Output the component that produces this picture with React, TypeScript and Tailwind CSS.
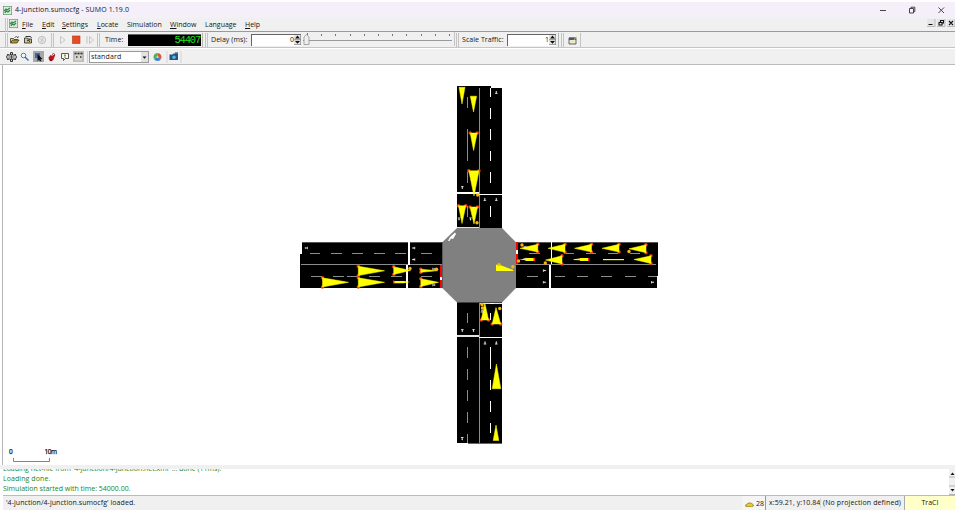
import React from "react";

const W = "bg-[#f0f0f0]";

function Label({ children, w, className = "" }: { children: React.ReactNode; w: string; className?: string }) {
  return <span className={`block shrink-0 whitespace-pre ${w} ${className}`}>{children}</span>;
}

function Grip() {
  return (
    <span className="flex h-[14px] w-[4px] shrink-0 gap-[1px]">
      <i className="w-[1px] bg-[#c4c4c4]" />
      <i className="w-[1px] bg-[#c4c4c4]" />
    </span>
  );
}

function NetIcon() {
  return (
    <svg width="9" height="9" viewBox="0 0 9 9" className="block shrink-0">
      <rect x=".3" y=".3" width="8.4" height="8.4" fill="#dcebdc" stroke="#51985a" strokeWidth=".7" />
      <path d="M1 5l2-2 1 1 3-2M2 7l1-2 2 1 2-2" stroke="#35854a" strokeWidth="1.2" fill="none" />
    </svg>
  );
}

function Spin() {
  return (
    <svg width="7" height="10" viewBox="0 0 7 10" className="block shrink-0">
      <path d="M0 0h7v10H0z" fill="#e5e5e5" />
      <path d="M0 4.7h7M0 9.7h7M6.7 0v10" stroke="#707070" strokeWidth=".7" />
      <path d="M3.5 .6l2.500 3h-5zM3.500 8.800L6 6H1z" fill="#111" />
    </svg>
  );
}

const menus: [string, string, string][] = [
  ["F", "ile", "w-[20px]"],
  ["E", "dit", "w-[20px]"],
  ["S", "ettings", "w-[35px]"],
  ["L", "ocate", "w-[30px]"],
  ["", "Simulation", "w-[43px]"],
  ["W", "indow", "w-[35px]"],
  ["", "Language", "w-[40px]"],
  ["H", "elp", "w-[20px]"],
];

type P = [number, number];

// tip, then the two corners of the wide end; braking cars carry red lights
function Car({ p, red = false }: { p: [P, P, P]; red?: boolean }) {
  return (
    <g>
      {red && [p[1], p[2]].map((q, i) => <circle key={i} cx={q[0]} cy={q[1]} r="1.7" fill="#f03a10" />)}
      <polygon points={p.map((q) => q.join(",")).join(" ")} fill="#ff0" stroke="#ff0" strokeWidth=".5" />
    </g>
  );
}

const cars: { p: [P, P, P]; red?: boolean }[] = [
  { p: [[462, 104], [459, 87.3], [465, 87.3]] },
  { p: [[473.5, 112], [470.3, 96.2], [476.6, 96.2]] },
  { p: [[473.6, 150.5], [470.2, 133], [477.2, 133]], red: true },
  { p: [[474, 196], [468.8, 170.8], [479, 170.8]], red: true },
  { p: [[462, 223.5], [458.5, 205.8], [465.8, 205.8]], red: true },
  { p: [[474, 224], [470, 207], [477.5, 207]], red: true },
  { p: [[384.5, 270.8], [358.3, 266.2], [358.3, 275.6]], red: true },
  { p: [[384.5, 282.3], [358.3, 277.8], [358.3, 287]], red: true },
  { p: [[348.5, 282.3], [322.5, 277.8], [322.5, 287]], red: true },
  { p: [[410.5, 270.5], [393.7, 266.8], [393.7, 274.4]], red: true },
  { p: [[437.5, 270.7], [420.8, 269.2], [420.8, 272.3]], red: true },
  { p: [[438.5, 282.3], [420.8, 278.8], [420.8, 286.5]], red: true },
  { p: [[520, 248.3], [537.8, 244.3], [537.8, 252]], red: true },
  { p: [[548, 248.3], [565, 244.3], [565, 252.3]], red: true },
  { p: [[574.5, 248.3], [591.5, 244.3], [591.5, 252]], red: true },
  { p: [[602, 248.3], [619, 244.3], [619, 252]], red: true },
  { p: [[629, 248.8], [646, 244.7], [646, 252.7]], red: true },
  { p: [[545.5, 260], [562, 255.8], [562, 264]], red: true },
  { p: [[634, 259.5], [651, 255.8], [651, 263.5]], red: true },
  { p: [[484.8, 303], [481.2, 320], [488.6, 320]], red: true },
  { p: [[496, 307.5], [492.2, 324], [500.7, 324]], red: true },
  { p: [[496.4, 364], [492.2, 388.7], [500.8, 388.7]] },
  { p: [[496, 425], [493.2, 440.5], [498.8, 440.5]] },
];

function Dashes({ at, cross, vertical, white }: { at: P[]; cross: number; vertical?: boolean; white?: boolean }) {
  return (
    <g fill={white ? "#fff" : "#8c8c8c"}>
      {at.map(([a, b]) =>
        vertical ? (
          <rect key={a} x={cross} y={a} width="1" height={b - a} />
        ) : (
          <rect key={a} x={a} y={cross} width={b - a} height="1" />
        )
      )}
    </g>
  );
}

const dots: P[] = [
  [477.7, 195], [477, 222.7], [499, 264.6], [512.8, 266.7], [410, 268.5], [436.5, 269.3],
  [522, 245], [518.5, 261], [545.3, 263], [629, 251.5], [482, 304.5], [499.7, 308.5], [482.500, 308],
];

// small white lane arrows: x, y, rotation
const arrows: [number, number, number][] = [
  [496.3, 92.5, 0], [462.3, 187.5, 180], [484.8, 199.5, 0], [496.3, 199.5, 0],
  [462.3, 330.5, 180], [473.5, 330.5, 180], [485, 342.8, 0], [496.3, 342.8, 0], [462.2, 438.7, 180],
  [306.2, 248, -90], [413.6, 248, -90], [413.6, 259.5, -90], [434, 269, 90], [434, 285, 90],
  [544.5, 270.6, 90], [544.5, 282.2, 90], [652.6, 282.2, 90], [524.8, 247, -90], [524.8, 259, -90],
  [459, 219, 180], [470.5, 219, 180], [482, 311, 0],
];

function Network() {
  return (
    <svg viewBox="3 65 952 400" width="952" height="400" className="block shrink-0">
      <g fill="#000" shapeRendering="crispEdges">
        <path d="M457 86h34v2h11v140h-45z" />
        <path d="M457 302h45v142h-34v-1h-11z" />
        <path d="M302 242h141v46H300v-34h2z" />
        <path d="M516 242h142v34h-1v12H516z" />
      </g>
      <path d="M457 228H502L516 242.3V288L502 302.5H457L442.3 288V242.3Z" fill="#808080" />
      <g fill="#8c8c8c" shapeRendering="crispEdges">
        <rect x="479" y="88" width="1" height="140" />
        <rect x="479" y="303" width="1" height="141" />
        <rect x="301" y="264" width="141" height="1" />
        <rect x="516" y="264" width="140" height="1" />
        <rect x="302" y="242" width="141" height="1" fill="#555" />
        <rect x="516" y="242" width="142" height="1" fill="#555" />
        <rect x="468" y="443" width="34" height="1" fill="#666" />
      </g>
      <g shapeRendering="crispEdges">
        <Dashes vertical cross={467} at={[[97, 108], [129, 140], [140, 151], [151, 161], [172, 183], [206, 217]]} />
        <Dashes vertical white cross={490} at={[[88, 97], [108, 119], [129, 140], [151, 161], [172, 183], [206, 217]]} />
        <Dashes vertical cross={467} at={[[313, 323], [347, 358], [369, 380], [390, 401], [412, 423], [434, 443]]} />
        <Dashes vertical white cross={490} at={[[313, 320], [347, 358], [358, 369], [380, 390], [401, 412], [423, 433]]} />
        <Dashes cross={253} at={[[310, 320], [331, 342], [352, 363], [374, 385], [395, 406], [421, 432]]} />
        <Dashes cross={276} at={[[311, 322], [333, 344], [347, 358], [369, 380], [391, 402], [421, 432]]} />
        <Dashes cross={253} at={[[529, 540], [564, 574], [586, 596], [608, 618], [630, 640]]} />
        <Dashes cross={276} at={[[527, 538], [555, 565], [577, 588], [601, 612], [625, 636], [648, 657]]} />
      </g>
      <g fill="#fff" shapeRendering="crispEdges">
        <rect x="457" y="192" width="22" height="2" />
        <rect x="479" y="194" width="23" height="1" />
        <rect x="457" y="335" width="22" height="2" fill="#e4e4e4" />
        <rect x="479" y="337" width="23" height="1" />
        <rect x="408" y="242" width="2" height="23" />
        <rect x="406" y="265" width="2" height="23" />
        <rect x="551" y="242" width="1" height="22" />
        <rect x="549" y="265" width="2" height="23" />
        <rect x="440" y="277" width="2" height="3" />
        <rect x="516" y="250" width="2" height="4" />
      </g>
      <g shapeRendering="crispEdges">
        <path d="M440 265h2v12h-2zM440 280h2v8h-2zM516 242h2v8h-2zM516 254h2v10h-2z" fill="#f00" />
        <path d="M457 227h22v1h-22zM480 303h22v1h-22z" fill="#ff0" />
        <rect x="465" y="227" width="4" height="1" fill="#ddd" />
        <rect x="490" y="303" width="4" height="1" fill="#fff" />
      </g>
      <path d="M448 241l2-4 5-4.500 1 1.500-3 5-2-.5-1.500 2.500z" fill="#fff" />
      {cars.map((c, i) => (
        <Car key={i} {...c} />
      ))}
      <g fill="#ff0">
        <path d="M496 264.700l4 .3 13.500 5-.5 1H496z" />
        <path d="M394 281h10l6 1-6 1.300h-10z" />
        <path d="M519 259.500l6-.8 1-.6h8v3h-8l-1-.8z" />
        <path d="M573.500 259.200l6-.6 1-.6h8v3h-8l-1-.8-6-.3z" />
        <path d="M603 259h21v1.200h-21z" />
      </g>
      <g fill="#f03010">
        <path d="M393 280.500h1.500v3H393zM533.500 257.800h1.500v3.500h-1.500zM588 258h1.500v3H588z" />
      </g>
      <g fill="#ffb400">
        {dots.map(([x, y], i) => (
          <circle key={i} cx={x} cy={y} r="1.700" />
        ))}
      </g>
      <g fill="#ddd">
        {arrows.map(([x, y, r], i) => (
          <path key={i} transform={`translate(${x} ${y}) rotate(${r})`} d="M0-1.800l1 1.600H.5v1h.8v.8h-2.600v-.8h.8v-1h-.5z" />
        ))}
      </g>
      <path d="M13.500 458v3.500h36V458" fill="none" stroke="#777" strokeWidth=".9" />
      <g fontFamily="Open Sans, sans-serif" fontSize="6.500" fill="#111" stroke="#111" strokeWidth=".25">
        <text x="9" y="454">0</text>
        <text x="44.500" y="454" textLength="12.500">10m</text>
      </g>
    </svg>
  );
}

export default function App() {
  return (
    <div className="flex h-[512px] w-[955px] flex-col overflow-hidden bg-white pt-[2px] font-['Open_Sans',sans-serif] text-[7px] leading-[10px] text-[#151515]">
      {/* title bar */}
      <header className="flex h-[16px] shrink-0 items-center bg-[#f4eff8] pl-[3px]">
        <NetIcon />
        <Label w="w-[865px]" className="pl-[3px] tracking-[0.11px]">4-junction.sumocfg - SUMO 1.19.0</Label>
        <svg width="72" height="12" viewBox="877 3 72 12" fill="none" stroke="#333" strokeWidth=".9" className="block">
          <path d="M880 9.500h6" />
          <path d="M909.500 7.500h4v4.500h-4zM911 7.300V6.200h3.800v4.500h-1" />
          <path d="M938.500 6.500l5.500 5.500M944 6.500l-5.500 5.500" />
        </svg>
      </header>

      {/* menu bar */}
      <nav className={`flex h-[14px] shrink-0 items-center border-b border-[#9a9a9a] pl-[5px] ${W}`}>
        <Grip />
        <span className="flex pb-[3px]"><NetIcon /></span>
        <span className="flex w-[910px] pl-[4px]">
          {menus.map(([u, rest, w]) => (
            <Label key={rest} w={w}>
              {u && <u className="decoration-[0.6px] underline-offset-1">{u}</u>}
              {rest}
            </Label>
          ))}
        </span>
        <svg width="28" height="8" viewBox="0 0 28 8" className="mb-[3px] block shrink-0">
          <path d="M0 0h8v8H0zM10 0h8v8h-8zM20 0h8v8h-8z" fill="#e6e6e6" />
          <path d="M0 7.600h8V0M10 7.600h8V0M20 7.600h8V0" fill="none" stroke="#999" strokeWidth=".6" />
          <path d="M1.500 5.500h4M12 3.500h3v2.500h-3zM13.500 3V1.500h3V4H15M22 2l4 4M26 2l-4 4" fill="none" stroke="#111" strokeWidth="1.100" />
        </svg>
      </nav>

      {/* simulation toolbar */}
      <div className={`flex h-[16px] shrink-0 items-center border-b border-[#c5c5c5] pl-[5px] ${W}`}>
        <Grip />
        <svg width="41" height="14" viewBox="9 32 41 14" className="block shrink-0">
          <path d="M10.500 41.500v-4h3l1 1h3v1" fill="#f8dc50" stroke="#222" strokeWidth=".7" />
          <path d="M10.500 42l2-3h6.500l-2 3z" fill="#b89a20" stroke="#222" strokeWidth=".7" />
          <path d="M14.500 36.500q2-2 3.500.3l.3-1.500" fill="none" stroke="#222" strokeWidth=".7" />
          <path d="M24.500 42v-5h3l1 1h3v4z" fill="#cfc78d" stroke="#222" strokeWidth=".8" />
          <path d="M25.500 35.500h5l1 1.500M27 40l3-1.500M28 38.500l2 2.500" fill="none" stroke="#222" strokeWidth=".9" />
          <circle cx="42" cy="39" r="3.700" fill="#e8e8e8" stroke="#c2c2c2" />
          <path d="M39.500 37.500l5 3M40 41l4-4M42 36v6" stroke="#c4c4c4" strokeWidth=".7" />
        </svg>
        <span className="ml-[1px] flex"><Grip /></span>
        <svg width="42" height="14" viewBox="55 32 42 14" className="block shrink-0">
          <path d="M60.500 35.500l4.500 3.500-4.500 3.500z" fill="#f0f0f0" stroke="#bdbdbd" strokeWidth=".8" />
          <rect x="72.500" y="35" width="7.500" height="7.500" fill="#e94a24" stroke="#ac391d" strokeWidth=".6" />
          <path d="M87 35v7.500M89.500 35.500l4 3.500-4 3.500z" fill="#f0f0f0" stroke="#bdbdbd" strokeWidth=".9" />
        </svg>
        <Grip />
        <Label w="w-[27px]" className="pl-[4px] tracking-[0.1px]">Time:</Label>
        <span className="flex h-[12px] w-[73px] shrink-0 items-center justify-end border-t border-[#666] bg-black pr-[1px] font-['Liberation_Mono',monospace] text-[10.5px] leading-[10px] text-[#20e020]">
          <span className="-tracking-[1.2px]">54407</span>
        </span>
        <span className="ml-[1px] flex border-l border-[#b5b5b5] pl-[2px]"><Grip /></span>
        <Label w="w-[42px]" className="pl-[2px] tracking-[0.05px]">Delay (ms):</Label>
        <span className="flex h-[12px] w-[50px] shrink-0 items-center justify-end border-l border-t border-[#666] bg-white">0<Spin /></span>
        <svg width="155" height="15" viewBox="301 32 155 15" className="block shrink-0">
          <path d="M303 40.500h149" stroke="#9a9a9a" strokeWidth="1.200" />
          <path d="M307.500 33v2M321.500 34v2M335.500 34v2M350.500 34v2M364.500 34v2M378.500 34v2M392.500 34v2M406.500 34v2M421.500 34v2M435.500 34v2M449.500 34v2" stroke="#555" strokeWidth=".8" />
          <path d="M304 37l2.500-2.500L309 37v7.500h-5z" fill="#eee" stroke="#888" strokeWidth=".7" />
          <path d="M454.500 32v14" stroke="#c4c4c4" />
        </svg>
        <Grip />
        <Label w="w-[47px]" className="pl-[2px] tracking-[0.05px]">Scale Traffic:</Label>
        <span className="flex h-[12px] w-[49px] shrink-0 items-center justify-end border-l border-t border-[#666] bg-white">1<Spin /></span>
        <span className="ml-[2px] flex border-l border-[#b5b5b5] pl-[2px]"><Grip /></span>
        <svg width="16" height="14" viewBox="565 32 16 14" className="block shrink-0">
          <path d="M569 37h7v6h-7z" fill="#eee8c6" stroke="#444" strokeWidth=".8" />
          <path d="M569 36.500h7V39h-7z" fill="#455779" />
          <path d="M574 39l2.500-3.500" stroke="#e1b728" />
          <path d="M580.500 32v14" stroke="#c4c4c4" />
        </svg>
      </div>

      {/* view toolbar */}
      <div className={`flex h-[17px] shrink-0 items-center border-b border-t border-b-[#bcbcbc] border-t-white pl-[3px] ${W}`}>
        <svg width="86" height="15" viewBox="3 49 86 15" className="block shrink-0">
          <path d="M10.500 52.500h2v2.500h2.500v-1l1.500 3-1.500 3v-1h-2.500v2.500h-2V59H8v1l-1.500-3L8 54v1h2.500z" fill="#ddd" stroke="#222" strokeWidth=".9" />
          <path d="M11.500 54v6M8.500 57h6" stroke="#222" strokeWidth=".7" />
          <circle cx="23.500" cy="55.500" r="2.300" fill="#eef7ff" stroke="#3a82ce" />
          <path d="M25 57l3.500 3.500" stroke="#246bb0" strokeWidth="1.300" />
          <rect x="33" y="51" width="11" height="11" fill="#a5a7aa" />
          <path d="M35 53h5v5h-5z" fill="#4169a2" />
          <path d="M37.500 54l5 5-2 .2 1 2h-1.500l-1-1.500-1.500 1.500z" fill="#111" />
          <path d="M48.500 57.500l2-2.500 2 1 1.500-2 1.300 1-2 5-2.300 1.500-2-1.500z" fill="#c0171c" />
          <circle cx="53.500" cy="54.500" r="1" fill="#f0f0f0" stroke="#7a1518" strokeWidth=".7" />
          <path d="M50 60h2" stroke="#222" strokeWidth="1.200" />
          <path d="M61.500 53.500h7v5h-3l-2 2v-2h-2z" fill="#fffce4" stroke="#333" strokeWidth=".8" />
          <path d="M65 54.500v2M65 57.300v.7" stroke="#222" />
          <rect x="73" y="51" width="11" height="11" fill="#bdbcb8" />
          <path d="M75 55h7v5.500h-7z" fill="#d9d5c7" />
          <path d="M74.500 53.500h2M77.500 53.500h2M80.500 53.500h2M76 57h1.500M80 57h1.500" stroke="#333" strokeWidth="1.300" />
          <path d="M87.500 51v12" stroke="#bbb" strokeWidth=".6" />
        </svg>
        <span className="flex h-[12px] w-[60px] shrink-0 items-center justify-between border border-[#999] bg-white pl-[1px]">
          <span className="tracking-[0.12px]">standard</span>
          <svg width="7" height="10" viewBox="0 0 7 10" className="block"><path d="M0 0h7v10H0z" fill="#e2e2e2" /><path d="M1.500 4.500h4l-2 2.300z" fill="#111" /></svg>
        </span>
        <svg width="34" height="15" viewBox="149 49 34 15" className="block shrink-0">
          <path d="M157.500 57V53a4 4 0 0 1 3.500 6z" fill="#e65332" />
          <path d="M157.500 57l3.500 2a4 4 0 0 1-7 0z" fill="#397fd8" />
          <path d="M157.500 57l-3.500 2a4 4 0 0 1 3.500-6z" fill="#42b65c" />
          <circle cx="157.500" cy="57" r="1" fill="#f5e070" />
          <path d="M167 51v12M181 51v12" stroke="#c5c5c5" strokeWidth=".6" />
          <path d="M169.500 54.500h3l1-1h4.500v6.500h-8.500z" fill="#215582" />
          <circle cx="174" cy="57.300" r="1.700" fill="#63b4e5" />
          <path d="M175 53h3" stroke="#333" />
        </svg>
      </div>

      <main className="ml-[2px] flex h-[400px] shrink-0 border-l border-[#b5b5b5] bg-white"><Network /></main>
      <div className={`h-[4px] shrink-0 ${W}`} />

      {/* message log */}
      <section className="flex h-[26px] shrink-0 justify-between bg-white pl-[3px] text-[#188518]">
        <div className="flex h-[25px] w-[300px] flex-col justify-end overflow-hidden whitespace-pre">
          <p className="h-[10px] shrink-0 -tracking-[0.01px]">Loading net-file from '4-junction/4-junction.net.xml' ... done (11ms).</p>
          <p className="h-[10px] shrink-0 tracking-[0.08px]">Loading done.</p>
          <p className="h-[10px] shrink-0">Simulation started with time: 54000.00.</p>
        </div>
        <svg width="6" height="26" viewBox="0 0 6 26" className="block">
          <path d="M0 0h6v26H0z" fill="#f0f0f0" />
          <path d="M3.500 3.500l2 2.500h-4zM3.500 22.500l2-2.500h-4z" fill="#111" />
          <path d="M0 8h6M0 17h6M0 25.500h6" stroke="#999" strokeWidth=".7" />
        </svg>
      </section>

      {/* status bar */}
      <footer className={`ml-[3px] flex h-[15px] shrink-0 items-center border-t border-[#bbb] ${W}`}>
        <Label w="w-[739px]" className="pl-[3px] tracking-[0.06px]">'4-junction/4-junction.sumocfg' loaded.</Label>
        <span className="flex h-[14px] w-[24px] shrink-0 items-center justify-end border-r border-[#999] bg-[#f5f5f5] pr-[1px] pt-[2px]">
          <svg width="9" height="5" viewBox="0 0 9 5" className="mr-[2px] block">
            <path d="M.5 3l1.500-.5 1-1.500h3l2 1.500.5 1.500-2 .7H1z" fill="#edcb23" stroke="#756112" strokeWidth=".6" />
          </svg>
          28
        </span>
        <Label w="w-[54px]" className="pl-[3px] tracking-[0.08px]">x:59.21, y:10.84</Label>
        <Label w="w-[84px]" className="border-l border-[#d5d5d5] pl-[2px] tracking-[0.12px]">(No projection defined)</Label>
        <span className="flex h-[14px] flex-1 items-center justify-center border-l border-[#aaa] bg-[#ffffca]">TraCI</span>
      </footer>
    </div>
  );
}
